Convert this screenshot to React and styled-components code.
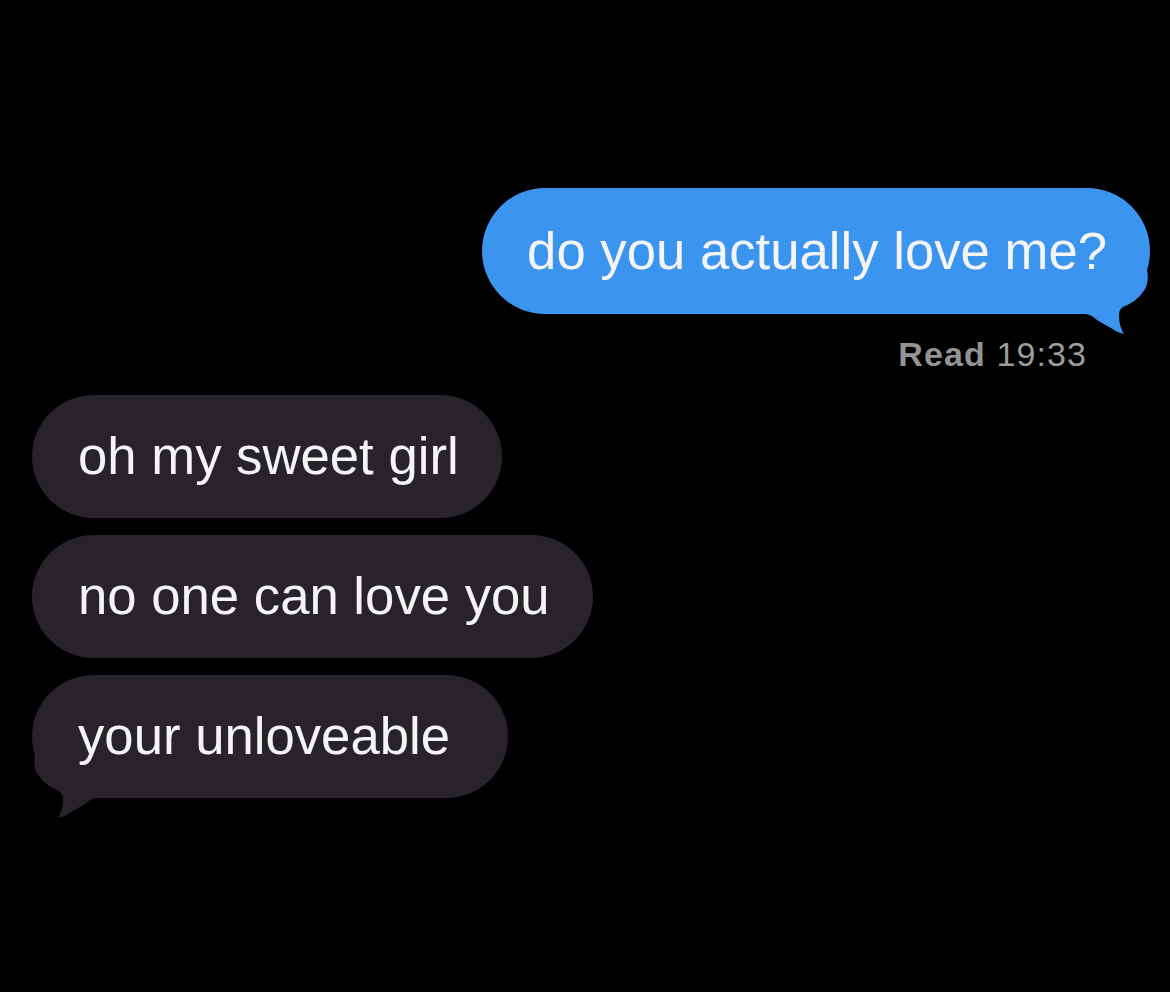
import React from "react";
import styled, { createGlobalStyle } from "styled-components";

const GlobalStyle = createGlobalStyle`
  html, body {
    margin: 0;
    padding: 0;
    background: #000;
  }
  body {
    font-family: "Liberation Sans", Arial, sans-serif;
    -webkit-font-smoothing: antialiased;
  }
`;

const messages = [
  { from: "me", text: "do you actually love me?", status: { label: "Read", time: "19:33" } },
  { from: "them", text: "oh my sweet girl" },
  { from: "them", text: "no one can love you" },
  { from: "them", text: "your unloveable ", tail: true },
];

const App = () => {
  return (
    <>
      <GlobalStyle />
      <Screen>
        <Thread>
          {messages.map((msg, index) => {
            const mine = msg.from === "me";
            const hasTail = mine || msg.tail;
            return (
              <Group key={index} $mine={mine}>
                <Bubble $mine={mine}>
                  {msg.text}
                  {hasTail && <Tail $mine={mine} />}
                </Bubble>
                {msg.status && (
                  <Status>
                    <StatusLabel>{msg.status.label}</StatusLabel> {msg.status.time}
                  </Status>
                )}
              </Group>
            );
          })}
        </Thread>
      </Screen>
    </>
  );
};

// little curled tail at the bubble's bottom corner (drawn for the right side, mirrored for the left)
const Tail = ({ $mine }) => (
  <TailSvg $mine={$mine} viewBox="0 0 70 70" width="70" height="70">
    <path
      d="M0,0 L62,0 C63.5,7 63,14 60,19 C56,26 48,33 40,36 C36,38 34,40 34,45 C34,53 36,59 39,64 C34,63 30,61 26,58 C20,55 16,52 12,50 C8,46 4,44 0,44 Z"
      fill="currentColor"
    />
  </TailSvg>
);

export default App;

const Screen = styled.div`
  width: 1170px;
  min-height: 992px;
  box-sizing: border-box;
  padding: 188px 20px 0 32px;
  background: #000;
`;

const Thread = styled.div`
  display: flex;
  flex-direction: column;
`;

const Group = styled.div`
  display: flex;
  flex-direction: column;
  align-items: ${(p) => (p.$mine ? "flex-end" : "flex-start")};
  margin-bottom: ${(p) => (p.$mine ? "21px" : "17px")};
`;

const Bubble = styled.div`
  position: relative;
  z-index: 0;
  padding: ${(p) => (p.$mine ? "32px 43px 32px 45px" : "30px 43px 31px 46px")};
  border-radius: 63px;
  font-size: 52.7px;
  line-height: 62px;
  white-space: pre;
  color: #f4f4f4;
  background: ${(p) => (p.$mine ? "#3b94ee" : "#28232a")};
`;

const TailSvg = styled.svg`
  position: absolute;
  z-index: -1;
  bottom: -26px;
  color: ${(p) => (p.$mine ? "#3b94ee" : "#28232a")};
  ${(p) =>
    p.$mine
      ? "right: -5px;"
      : "left: -5px; transform: scaleX(-1);"}
`;

const Status = styled.div`
  margin-top: 20px;
  margin-right: 63px;
  font-size: 34px;
  line-height: 40px;
  letter-spacing: 1.1px;
  color: #9c9c9c;
`;

const StatusLabel = styled.span`
  font-weight: 700;
  color: #939393;
`;
